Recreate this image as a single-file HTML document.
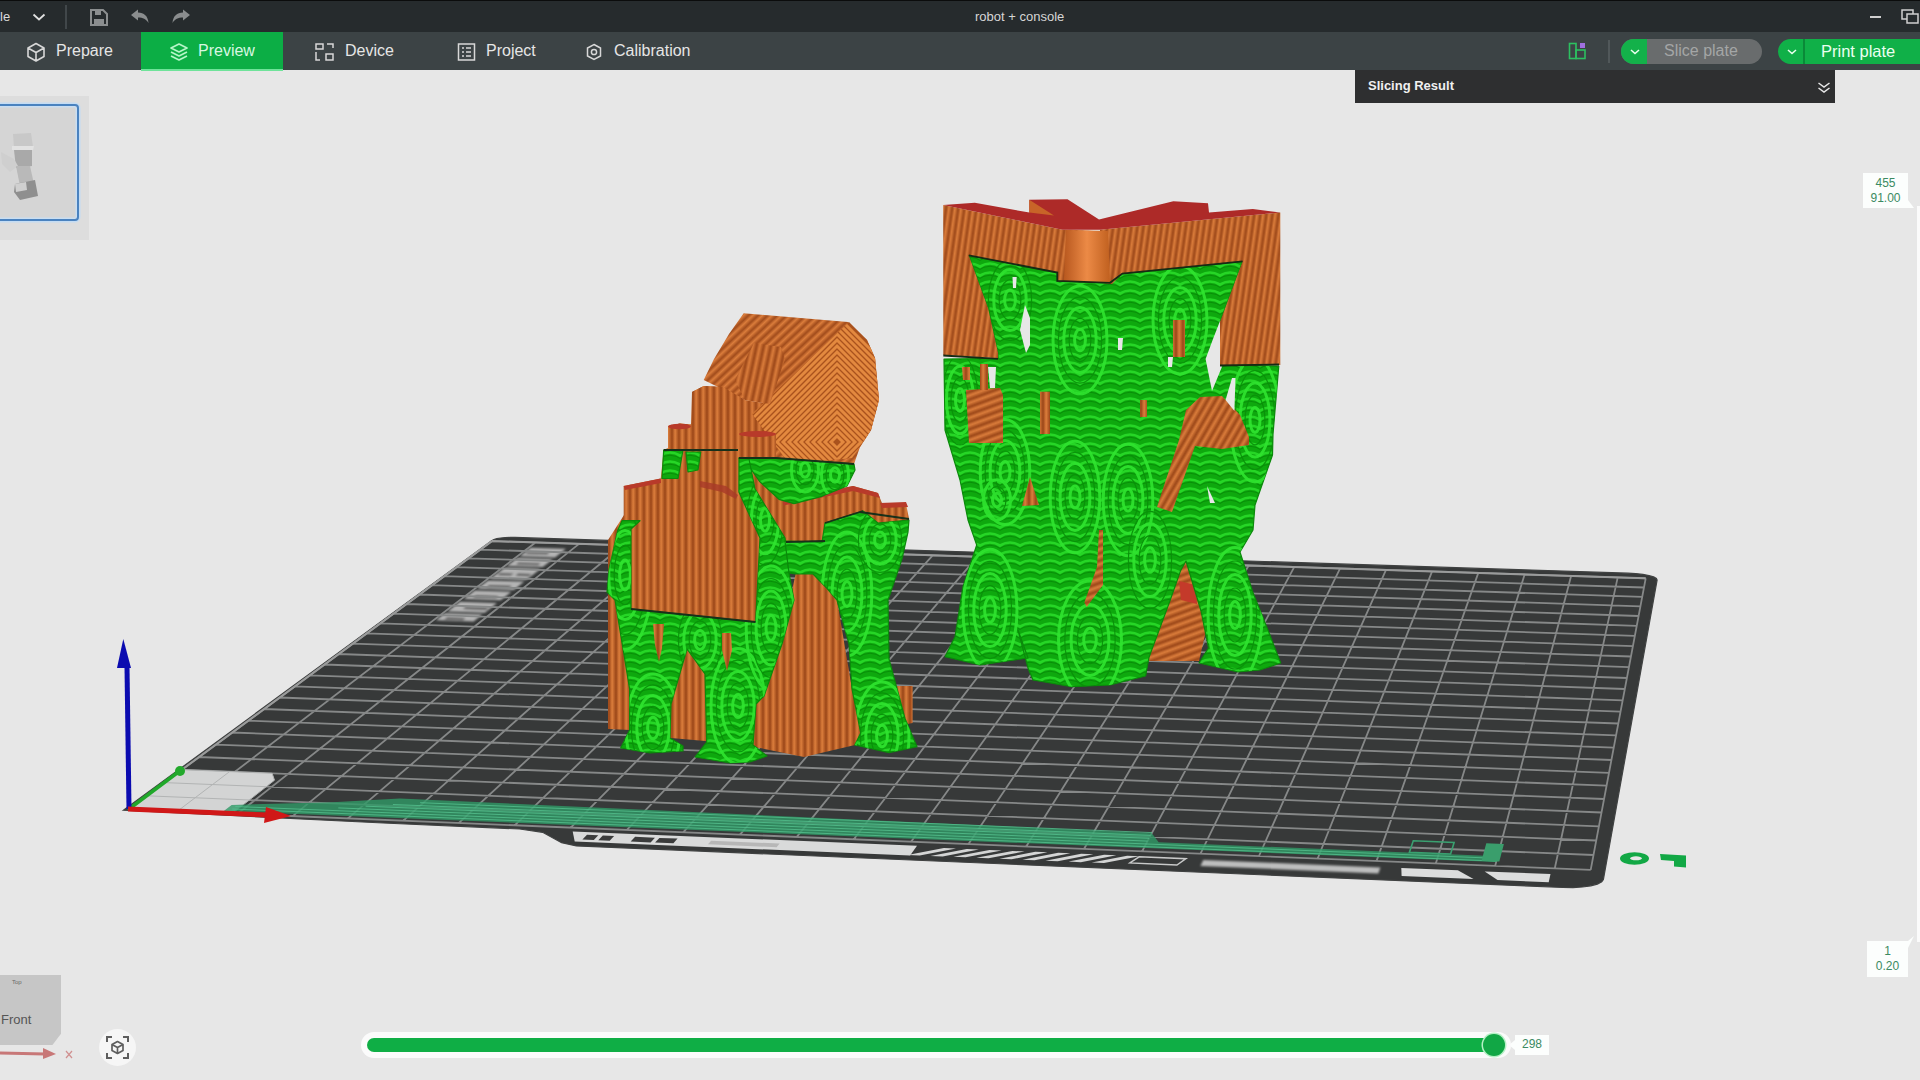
<!DOCTYPE html>
<html><head><meta charset="utf-8"><style>
html,body{margin:0;padding:0;width:1920px;height:1080px;overflow:hidden;background:#e7e7e7;font-family:"Liberation Sans", sans-serif}
#scene{position:absolute;left:0;top:0}
.tt{position:absolute;white-space:nowrap;line-height:1}
#titlebar{position:absolute;left:0;top:0;width:1920px;height:32px;background:#262b2d;border-top:1px solid #0b0c0c;box-sizing:border-box}
#tabbar{position:absolute;left:0;top:0;width:1920px;height:70px;pointer-events:none}
#tabbar::before{content:"";position:absolute;left:0;top:32px;width:1920px;height:38px;background:#3c4345}
#slres{position:absolute;left:1355px;top:70px;width:480px;height:33px;background:#2e2f30}
#thumbpanel{position:absolute;left:0;top:96px;width:89px;height:144px;background:#dddddd}
#thumb{position:absolute;left:-4px;top:104px;width:79px;height:113px;border:2px solid #4a82bf;border-radius:4px;background:#d5d5d5;box-shadow:0 0 0 1.5px #c4dcf3, inset 0 0 0 1.5px #c9def2}
.lbl{position:absolute;background:#fcfefd;font-size:12px;color:#3b8a62;line-height:1}
#cube{position:absolute;left:0;top:975px;width:61px;height:70px;background:#c6c6c6;clip-path:polygon(0 0,100% 0,100% 84%,86% 100%,0 100%)}
</style></head><body>
<svg id="scene" width="1920" height="1080" viewBox="0 0 1920 1080">
<defs>
<linearGradient id="sg" x1="0" x2="1" y1="0" y2="0"><stop offset="0" stop-color="#9a4618"/><stop offset="0.45" stop-color="#dc7e3c"/><stop offset="1" stop-color="#9a4618"/></linearGradient>
<pattern id="ostripe" width="7" height="10" patternUnits="userSpaceOnUse"><rect width="7" height="10" fill="url(#sg)"/></pattern>
<pattern id="ostripe2" width="6.5" height="10" patternUnits="userSpaceOnUse" patternTransform="rotate(47)"><rect width="7" height="10" fill="url(#sg)"/></pattern>
<pattern id="ostripe3" width="6" height="10" patternUnits="userSpaceOnUse" patternTransform="rotate(8)"><rect width="6" height="10" fill="url(#sg)"/></pattern>
<pattern id="ostripe4" width="7" height="10" patternUnits="userSpaceOnUse" patternTransform="rotate(12)"><rect width="7" height="10" fill="url(#sg)"/></pattern>
<pattern id="ostripe5" width="7" height="10" patternUnits="userSpaceOnUse" patternTransform="rotate(70)"><rect width="7" height="10" fill="url(#sg)"/></pattern>
<pattern id="ostripe6" width="7" height="10" patternUnits="userSpaceOnUse" patternTransform="rotate(30)"><rect width="7" height="10" fill="url(#sg)"/></pattern>
<linearGradient id="ocorner" x1="0" x2="1"><stop offset="0" stop-color="#b8581f"/><stop offset="0.5" stop-color="#ec8a46"/><stop offset="1" stop-color="#c0601f"/></linearGradient>
<pattern id="gtex" width="20" height="9" patternUnits="userSpaceOnUse"><rect width="20" height="9" fill="#0ea80e"/><path d="M-2 7 Q10 -2 22 7" stroke="#26d626" stroke-width="2.6" fill="none"/><path d="M-2 9.5 Q10 1 22 9.5" stroke="#078e07" stroke-width="1" fill="none"/></pattern>
<filter id="blur1" x="-20%" y="-20%" width="140%" height="140%"><feGaussianBlur stdDeviation="1.2"/></filter>
<clipPath id="headclip"><polygon points="849.0,322.0 867.0,340.0 875.0,358.0 879.0,400.0 871.0,430.0 860.0,447.0 852.0,458.0 790.0,465.0 752.0,414.0"/></clipPath><clipPath id="gc1"><polygon points="739.0,458.0 774.5,458.0 854.0,464.0 855.0,470.0 847.0,486.0 822.0,496.3 794.0,503.7 779.0,499.3 759.6,481.5 749.3,466.7"/></clipPath><clipPath id="gc2"><polygon points="739.0,458.0 749.0,459.0 755.0,489.0 785.0,538.0 789.0,573.0 794.0,600.0 782.0,644.0 764.0,696.0 756.0,704.0 753.0,745.0 767.0,756.0 750.0,762.0 730.0,763.0 695.0,757.0 706.7,742.0 705.0,674.0 687.0,649.0 671.0,704.0 670.0,738.0 683.0,746.0 683.0,751.0 650.0,753.0 620.7,748.0 629.6,730.0 629.6,689.0 615.0,600.0 607.0,592.0 609.0,570.0 617.8,530.0 622.0,520.7 640.0,520.7 631.0,529.0 631.0,609.0 755.6,622.0 760.0,538.0 738.9,492.0"/></clipPath><clipPath id="gc3"><polygon points="785.0,541.0 822.0,542.0 825.0,523.0 863.0,511.0 878.0,523.0 909.0,520.0 908.0,532.0 902.0,559.0 888.0,600.0 889.0,659.0 905.0,718.5 917.0,746.7 889.0,752.6 854.8,745.0 860.7,733.0 852.0,689.0 849.0,644.0 837.0,600.0 826.7,588.0 813.0,574.0 795.6,574.0 789.0,573.0"/></clipPath><clipPath id="gc4"><polygon points="968.7,255.3 1057.3,272.6 1057.3,280.8 1110.0,282.8 1122.4,273.6 1242.6,261.4 1220.0,322.0 1220.0,365.0 1278.8,366.0 1273.0,434.0 1272.5,455.0 1255.0,505.0 1253.0,530.0 1240.0,552.0 1253.0,592.6 1267.8,629.6 1280.7,663.0 1260.0,670.0 1238.0,672.0 1199.0,663.0 1208.5,648.0 1201.0,611.0 1186.0,561.0 1180.7,570.4 1169.6,601.9 1149.0,657.4 1145.6,676.0 1110.0,685.0 1071.7,686.7 1033.0,680.0 1028.0,668.0 1018.0,630.0 1028.0,658.0 980.0,665.0 945.0,656.7 955.0,636.7 963.0,586.7 976.7,545.0 968.0,520.0 960.0,480.0 945.0,430.0 944.0,359.0 998.0,358.3 998.0,353.0 988.0,308.0"/></clipPath></defs>
<polygon points="123.4,810.2 383.2,823.0 519.6,829.0 542.6,832.3 561.6,842.7 576.3,845.9 1562.9,887.5 1573.0,887.6 1582.5,887.0 1590.8,885.8 1597.4,884.1 1601.7,881.9 1603.4,879.4 1657.1,580.0 1656.4,578.5 1653.6,576.9 1649.0,575.6 1642.9,574.4 1635.7,573.6 1627.9,573.2 515.0,537.4 510.1,537.4 505.2,537.6 500.7,538.0 496.8,538.7 493.9,539.5 492.0,540.4" fill="#373939" stroke="#404242" stroke-width="1.2"/>
<g filter="url(#blur1)">
<polygon points="519.7,556.3 555.0,557.4 566.0,548.8 530.9,547.7" fill="#b4b4b4"/>
<polygon points="507.0,566.0 542.7,567.1 552.8,559.2 517.4,558.0" fill="#b4b4b4"/>
<polygon points="490.5,578.5 526.6,579.8 540.4,568.9 504.7,567.7" fill="#b4b4b4"/>
<polygon points="477.3,588.6 513.8,589.9 524.3,581.6 488.2,580.4" fill="#b4b4b4"/>
<polygon points="463.8,599.0 500.6,600.2 511.4,591.7 474.9,590.5" fill="#b4b4b4"/>
<polygon points="447.5,611.4 484.8,612.7 497.0,603.1 460.1,601.8" fill="#b4b4b4"/>
<polygon points="436.0,620.2 473.6,621.5 482.3,614.6 445.0,613.3" fill="#b4b4b4"/>
<polygon points="525.0,553.9 547.1,554.6 549.8,552.6 527.7,551.9" fill="#555"/>
<polygon points="515.8,564.6 538.0,565.3 540.7,563.2 518.5,562.5" fill="#555"/>
<polygon points="497.3,575.2 510.8,575.6 513.6,573.5 500.1,573.0" fill="#555"/>
<polygon points="515.3,575.8 528.8,576.2 531.6,574.1 518.1,573.6" fill="#555"/>
<polygon points="486.3,587.2 509.1,588.0 511.9,585.8 489.2,585.0" fill="#555"/>
<polygon points="472.9,597.5 495.9,598.3 498.8,596.0 475.9,595.2" fill="#555"/>
<polygon points="462.7,609.1 485.9,609.9 488.8,607.6 465.7,606.8" fill="#555"/>
<polygon points="444.1,619.6 462.8,620.3 465.9,617.9 447.2,617.3" fill="#555"/>
</g>
<path d="M128.2 809.3L491.9 541.1 M182.8 811.5L535.5 542.5 M237.6 813.8L579.1 543.9 M292.7 816.1L622.9 545.3 M347.9 818.4L666.7 546.7 M403.3 820.6L710.7 548.1 M458.9 822.9L754.9 549.6 M514.7 825.3L799.1 551.0 M570.7 827.6L843.5 552.4 M626.9 829.9L888.0 553.8 M683.4 832.2L932.7 555.3 M740.0 834.6L977.4 556.7 M796.8 836.9L1022.3 558.2 M853.8 839.3L1067.3 559.6 M911.1 841.7L1112.5 561.1 M968.5 844.0L1157.7 562.5 M1026.2 846.4L1203.1 564.0 M1084.1 848.8L1248.7 565.5 M1142.2 851.2L1294.3 566.9 M1200.5 853.6L1340.1 568.4 M1259.0 856.0L1386.0 569.9 M1317.7 858.5L1432.1 571.4 M1376.6 860.9L1478.3 572.9 M1435.8 863.4L1524.6 574.4 M1495.2 865.8L1571.1 575.9 M1554.8 868.3L1617.7 577.4 M1590.7 869.8L1645.7 578.3 M128.2 809.3L1590.7 869.8 M146.5 795.8L1593.5 855.0 M164.4 782.6L1596.2 840.5 M181.9 769.7L1598.9 826.4 M199.0 757.0L1601.5 812.5 M215.8 744.6L1604.0 799.0 M232.3 732.5L1606.5 785.7 M248.4 720.6L1609.0 772.8 M264.2 709.0L1611.4 760.0 M279.7 697.5L1613.7 747.6 M294.9 686.3L1616.0 735.4 M309.9 675.3L1618.3 723.5 M324.5 664.5L1620.5 711.7 M338.8 654.0L1622.7 700.3 M352.9 643.6L1624.8 689.0 M366.7 633.4L1626.9 678.0 M380.3 623.4L1628.9 667.1 M393.6 613.6L1630.9 656.5 M406.7 604.0L1632.9 646.1 M419.5 594.5L1634.8 635.9 M432.1 585.2L1636.7 625.8 M444.5 576.1L1638.6 616.0 M456.7 567.1L1640.4 606.3 M468.6 558.3L1642.2 596.8 M480.4 549.6L1644.0 587.5 M491.9 541.1L1645.7 578.3" stroke="#868888" stroke-width="1.8" fill="none"/>
<path d="M128.2 809.3L491.9 541.1 M491.9 541.1L1645.7 578.3" stroke="#9a9b9b" stroke-width="2" fill="none"/>
<polygon points="128.2,809.3 232.1,813.6 274.5,780.2 272.1,773.3 181.9,769.7" fill="#d3d4d4" stroke="#b0b2b2" stroke-width="1"/>
<path d="M177.3 811.3L229.6 771.6 M146.5 795.8L249.4 800.0 M164.4 782.6L266.2 786.7" stroke="#b2b4b4" stroke-width="1" fill="none"/>
<polygon points="223.8,811.1 1496.2,862.1 1497.7,856.2 1158.7,842.3 1151.8,833.3 399.8,798.4 332.4,802.3 231.6,804.9" fill="#2f9a66" opacity="0.8"/>
<path d="M232.2 809.0L1496.4 861.1 M235.3 806.5L1497.1 858.4 M338.3 807.9L1147.6 841.1 M365.6 806.2L1149.1 838.3 M392.9 804.5L1150.6 835.4 M420.1 802.7L1152.1 832.6" stroke="#55c08e" stroke-width="1" fill="none" opacity="0.8"/>
<polygon points="1409.4,852.3 1450.6,854.0 1454.1,842.4 1413.3,840.8" fill="none" stroke="#3aa070" stroke-width="1.6"/>
<polygon points="1481.5,860.8 1499.3,861.5 1503.9,844.0 1486.3,843.3" fill="#3a9e6c"/>
<polygon points="572.7,831.5 917.0,845.7 910.1,855.5 574.7,841.5" fill="#d9dada"/>
<polygon points="907.5,854.9 919.7,855.4 956.0,848.6 943.9,848.0" fill="#d4d5d5"/>
<polygon points="930.4,855.9 942.6,856.4 978.8,849.5 966.7,849.0" fill="#d4d5d5"/>
<polygon points="953.4,856.8 965.6,857.3 1001.7,850.4 989.5,849.9" fill="#d4d5d5"/>
<polygon points="976.3,857.8 988.5,858.3 1024.6,851.4 1012.4,850.9" fill="#d4d5d5"/>
<polygon points="999.3,858.8 1011.6,859.3 1047.5,852.3 1035.3,851.8" fill="#d4d5d5"/>
<polygon points="1022.4,859.7 1034.6,860.2 1070.4,853.3 1058.2,852.8" fill="#d4d5d5"/>
<polygon points="1045.4,860.7 1057.7,861.2 1093.4,854.3 1081.2,853.7" fill="#d4d5d5"/>
<polygon points="1068.5,861.6 1080.8,862.2 1116.4,855.2 1104.2,854.7" fill="#d4d5d5"/>
<polygon points="1091.7,862.6 1104.0,863.1 1139.5,856.2 1127.2,855.7" fill="#d4d5d5"/>
<polygon points="1139.2,856.8 1186.0,858.7 1176.9,865.0 1129.8,863.0" fill="none" stroke="#c8c9c9" stroke-width="1.4"/>
<polygon points="1203.3,860.0 1380.4,867.4 1378.3,873.4 1200.4,865.9" fill="#bdbebe" filter="url(#blur1)"/>
<polygon points="1401.3,867.9 1457.8,870.3 1473.5,879.0 1401.6,876.0" fill="#dcdddd"/>
<polygon points="1484.7,871.4 1550.5,874.1 1548.7,882.2 1497.5,880.0" fill="#dcdddd"/>
<polygon points="587.0,834.8 598.3,835.3 593.8,840.0 582.4,839.5" fill="#3b3c3c"/>
<polygon points="602.8,835.5 614.1,836.0 609.7,840.7 598.3,840.2" fill="#3b3c3c"/>
<polygon points="635.1,836.8 654.9,837.7 650.6,842.4 630.7,841.6" fill="#3b3c3c"/>
<polygon points="659.4,837.9 677.6,838.6 673.4,843.3 655.1,842.6" fill="#3b3c3c"/>
<polygon points="711.1,840.7 779.6,843.6 776.6,847.2 708.0,844.3" fill="#a0a0a0" opacity="0.6"/>
<ellipse cx="1634.5" cy="858.5" rx="14.5" ry="6.2" fill="#12a845"/><ellipse cx="1636" cy="858.3" rx="6" ry="2" fill="#e7e7e7"/>
<polygon points="1660,854 1686,855.5 1686,867.5 1674,866.5 1674,861 1661,860" fill="#12a845"/>
<path d="M129 809 L177 773" stroke="#20a82a" stroke-width="3.5" stroke-linecap="round"/><circle cx="180" cy="771" r="5" fill="#23a92c"/>
<path d="M129 809 L127 667" stroke="#0b0bb0" stroke-width="5"/><polygon points="117,668 123.3,639 131,668" fill="#0b0bb0"/>
<path d="M128 809 L268 815" stroke="#d01818" stroke-width="5"/><polygon points="266,807 291,816 264,823" fill="#d01818"/>
<polygon points="608.0,540.0 624.0,515.0 760.0,515.0 790.0,600.0 837.0,600.0 852.0,689.0 898.0,686.0 912.6,686.0 912.6,723.0 861.0,733.0 855.0,745.0 804.0,757.0 760.0,748.0 705.0,741.0 671.0,738.0 630.0,730.0 608.0,729.0" fill="url(#ostripe)" />
<polygon points="623.7,486.0 660.7,478.5 663.7,450.0 668.0,448.0 668.0,426.0 680.0,423.5 691.0,424.4 692.0,392.0 703.7,386.0 723.0,387.0 745.0,400.0 770.0,404.0 776.0,433.0 776.0,457.0 739.0,458.0 738.9,492.0 760.0,538.0 631.0,529.0 623.7,520.0" fill="url(#ostripe)" />
<polygon points="743.7,313.3 848.0,322.0 867.0,340.0 875.0,358.0 879.0,400.0 871.0,430.0 860.0,447.0 854.0,464.0 776.0,458.0 770.0,404.0 745.0,400.0 703.7,380.0 714.0,359.0 729.0,334.0" fill="url(#ostripe2)" />
<g clip-path="url(#headclip)"><rect x="700" y="310" width="180" height="160" fill="#a9521d"/><polygon points="837.0,436.0 843.0,442.0 837.0,448.0 831.0,442.0" fill="none" stroke="#e3893f" stroke-width="3.0"/><polygon points="837.0,430.0 849.0,442.0 837.0,454.0 825.0,442.0" fill="none" stroke="#e3893f" stroke-width="3.0"/><polygon points="837.0,424.0 855.0,442.0 837.0,460.0 819.0,442.0" fill="none" stroke="#e3893f" stroke-width="3.0"/><polygon points="837.0,418.0 861.0,442.0 837.0,466.0 813.0,442.0" fill="none" stroke="#e3893f" stroke-width="3.0"/><polygon points="837.0,412.0 867.0,442.0 837.0,472.0 807.0,442.0" fill="none" stroke="#e3893f" stroke-width="3.0"/><polygon points="837.0,406.0 873.0,442.0 837.0,478.0 801.0,442.0" fill="none" stroke="#e3893f" stroke-width="3.0"/><polygon points="837.0,400.0 879.0,442.0 837.0,484.0 795.0,442.0" fill="none" stroke="#e3893f" stroke-width="3.0"/><polygon points="837.0,394.0 885.0,442.0 837.0,490.0 789.0,442.0" fill="none" stroke="#e3893f" stroke-width="3.0"/><polygon points="837.0,388.0 891.0,442.0 837.0,496.0 783.0,442.0" fill="none" stroke="#e3893f" stroke-width="3.0"/><polygon points="837.0,382.0 897.0,442.0 837.0,502.0 777.0,442.0" fill="none" stroke="#e3893f" stroke-width="3.0"/><polygon points="837.0,376.0 903.0,442.0 837.0,508.0 771.0,442.0" fill="none" stroke="#e3893f" stroke-width="3.0"/><polygon points="837.0,370.0 909.0,442.0 837.0,514.0 765.0,442.0" fill="none" stroke="#e3893f" stroke-width="3.0"/><polygon points="837.0,364.0 915.0,442.0 837.0,520.0 759.0,442.0" fill="none" stroke="#e3893f" stroke-width="3.0"/><polygon points="837.0,358.0 921.0,442.0 837.0,526.0 753.0,442.0" fill="none" stroke="#e3893f" stroke-width="3.0"/><polygon points="837.0,352.0 927.0,442.0 837.0,532.0 747.0,442.0" fill="none" stroke="#e3893f" stroke-width="3.0"/><polygon points="837.0,346.0 933.0,442.0 837.0,538.0 741.0,442.0" fill="none" stroke="#e3893f" stroke-width="3.0"/><polygon points="837.0,340.0 939.0,442.0 837.0,544.0 735.0,442.0" fill="none" stroke="#e3893f" stroke-width="3.0"/><polygon points="837.0,334.0 945.0,442.0 837.0,550.0 729.0,442.0" fill="none" stroke="#e3893f" stroke-width="3.0"/><polygon points="837.0,328.0 951.0,442.0 837.0,556.0 723.0,442.0" fill="none" stroke="#e3893f" stroke-width="3.0"/><polygon points="837.0,322.0 957.0,442.0 837.0,562.0 717.0,442.0" fill="none" stroke="#e3893f" stroke-width="3.0"/><polygon points="837.0,316.0 963.0,442.0 837.0,568.0 711.0,442.0" fill="none" stroke="#e3893f" stroke-width="3.0"/></g>
<polygon points="754.0,343.0 781.0,347.0 785.0,359.0 770.0,404.0 745.0,400.0 735.0,380.0" fill="url(#ostripe4)" />
<polygon points="692.0,392.0 703.7,386.0 723.0,387.0 745.0,400.0 738.0,458.0 692.0,449.0" fill="url(#ostripe)" />
<polygon points="668.0,426.0 680.0,423.5 691.0,424.4 691.0,449.0 668.0,449.0" fill="url(#ostripe)" />
<polygon points="739.0,434.0 757.0,431.0 776.0,434.0 776.0,457.0 740.0,457.0" fill="url(#ostripe)" />
<ellipse cx="679.5" cy="426.5" rx="11.5" ry="2.8" fill="#b83a2a"/>
<ellipse cx="757.5" cy="434" rx="18.5" ry="3" fill="#b83a2a"/>
<polygon points="815.0,505.0 865.0,505.0 865.0,545.0 815.0,545.0" fill="url(#ostripe)" />
<polygon points="774.5,502.0 853.0,486.0 878.0,493.0 882.7,505.0 906.0,504.0 909.0,518.6 909.0,528.0 881.0,530.0 860.0,512.0 819.0,523.0 825.0,541.0 786.0,542.0 774.5,514.0" fill="url(#ostripe)" />
<polygon points="774.5,502.0 853.0,486.0 878.0,493.0 880.0,498.0 853.0,491.0 776.0,507.0" fill="#b83a2a" />
<polygon points="880.0,503.0 906.0,502.0 908.0,507.0 882.0,508.0" fill="#b83a2a" />
<polygon points="623.7,486.0 660.7,478.5 661.0,483.0 625.0,490.0" fill="#b83a2a" />
<polygon points="700.0,481.0 726.0,486.0 738.0,495.0 736.0,499.0 722.0,492.0 700.0,487.0" fill="#a83a28" opacity="0.8"/>
<polygon points="749.0,459.0 780.0,459.0 786.0,542.0 760.0,538.0" fill="url(#ostripe)" />
<polygon points="795.6,574.0 813.0,574.0 826.7,588.0 837.0,600.0 790.0,600.0" fill="url(#ostripe)" />
<polygon points="739.0,458.0 774.5,458.0 854.0,464.0 855.0,470.0 847.0,486.0 822.0,496.3 794.0,503.7 779.0,499.3 759.6,481.5 749.3,466.7" fill="url(#gtex)" stroke="#0b8a0b" stroke-width="1.2" stroke-linejoin="round"/>
<g clip-path="url(#gc1)" opacity="0.9"><ellipse cx="805.0" cy="470.0" rx="4.5" ry="7.3" fill="none" stroke="#30e430" stroke-width="3.0"/><ellipse cx="805.0" cy="470.0" rx="9.0" ry="14.6" fill="none" stroke="#0a900a" stroke-width="1.2"/><ellipse cx="805.0" cy="470.0" rx="13.5" ry="21.9" fill="none" stroke="#30e430" stroke-width="3.0"/><ellipse cx="835.0" cy="475.0" rx="4.5" ry="7.3" fill="none" stroke="#30e430" stroke-width="3.0"/><ellipse cx="835.0" cy="475.0" rx="9.0" ry="14.6" fill="none" stroke="#0a900a" stroke-width="1.2"/><ellipse cx="835.0" cy="475.0" rx="13.5" ry="21.9" fill="none" stroke="#30e430" stroke-width="3.0"/></g>
<polygon points="663.7,450.0 683.0,450.0 678.0,478.5 662.0,478.5" fill="url(#gtex)" stroke="#0b8a0b" stroke-width="1.2" stroke-linejoin="round"/>
<polygon points="686.0,452.0 700.7,452.0 698.0,470.0 688.0,472.0" fill="url(#gtex)" stroke="#0b8a0b" stroke-width="1.2" stroke-linejoin="round"/>
<polygon points="739.0,458.0 749.0,459.0 755.0,489.0 785.0,538.0 789.0,573.0 794.0,600.0 782.0,644.0 764.0,696.0 756.0,704.0 753.0,745.0 767.0,756.0 750.0,762.0 730.0,763.0 695.0,757.0 706.7,742.0 705.0,674.0 687.0,649.0 671.0,704.0 670.0,738.0 683.0,746.0 683.0,751.0 650.0,753.0 620.7,748.0 629.6,730.0 629.6,689.0 615.0,600.0 607.0,592.0 609.0,570.0 617.8,530.0 622.0,520.7 640.0,520.7 631.0,529.0 631.0,609.0 755.6,622.0 760.0,538.0 738.9,492.0" fill="url(#gtex)" stroke="#0b8a0b" stroke-width="1.2" stroke-linejoin="round"/>
<g clip-path="url(#gc2)" opacity="0.9"><ellipse cx="653.0" cy="728.0" rx="5.4" ry="10.8" fill="none" stroke="#30e430" stroke-width="3.0"/><ellipse cx="653.0" cy="728.0" rx="10.8" ry="21.6" fill="none" stroke="#0a900a" stroke-width="1.2"/><ellipse cx="653.0" cy="728.0" rx="16.2" ry="32.4" fill="none" stroke="#30e430" stroke-width="3.0"/><ellipse cx="653.0" cy="728.0" rx="21.6" ry="43.2" fill="none" stroke="#0a900a" stroke-width="1.2"/><ellipse cx="653.0" cy="728.0" rx="27.0" ry="54.0" fill="none" stroke="#30e430" stroke-width="3.0"/><ellipse cx="738.0" cy="706.0" rx="5.4" ry="11.5" fill="none" stroke="#30e430" stroke-width="3.0"/><ellipse cx="738.0" cy="706.0" rx="10.8" ry="23.0" fill="none" stroke="#0a900a" stroke-width="1.2"/><ellipse cx="738.0" cy="706.0" rx="16.2" ry="34.4" fill="none" stroke="#30e430" stroke-width="3.0"/><ellipse cx="738.0" cy="706.0" rx="21.6" ry="45.9" fill="none" stroke="#0a900a" stroke-width="1.2"/><ellipse cx="738.0" cy="706.0" rx="27.0" ry="57.4" fill="none" stroke="#30e430" stroke-width="3.0"/><ellipse cx="771.0" cy="628.0" rx="5.0" ry="12.4" fill="none" stroke="#30e430" stroke-width="3.0"/><ellipse cx="771.0" cy="628.0" rx="9.9" ry="24.8" fill="none" stroke="#0a900a" stroke-width="1.2"/><ellipse cx="771.0" cy="628.0" rx="14.9" ry="37.1" fill="none" stroke="#30e430" stroke-width="3.0"/><ellipse cx="771.0" cy="628.0" rx="19.8" ry="49.5" fill="none" stroke="#0a900a" stroke-width="1.2"/><ellipse cx="771.0" cy="628.0" rx="24.8" ry="61.9" fill="none" stroke="#30e430" stroke-width="3.0"/><ellipse cx="625.0" cy="575.0" rx="5.4" ry="14.9" fill="none" stroke="#30e430" stroke-width="3.0"/><ellipse cx="625.0" cy="575.0" rx="10.8" ry="29.7" fill="none" stroke="#0a900a" stroke-width="1.2"/><ellipse cx="625.0" cy="575.0" rx="16.2" ry="44.6" fill="none" stroke="#30e430" stroke-width="3.0"/><ellipse cx="625.0" cy="575.0" rx="21.6" ry="59.4" fill="none" stroke="#0a900a" stroke-width="1.2"/><ellipse cx="625.0" cy="575.0" rx="27.0" ry="74.2" fill="none" stroke="#30e430" stroke-width="3.0"/><ellipse cx="700.0" cy="640.0" rx="5.4" ry="9.5" fill="none" stroke="#30e430" stroke-width="3.0"/><ellipse cx="700.0" cy="640.0" rx="10.8" ry="18.9" fill="none" stroke="#0a900a" stroke-width="1.2"/><ellipse cx="700.0" cy="640.0" rx="16.2" ry="28.4" fill="none" stroke="#30e430" stroke-width="3.0"/><ellipse cx="700.0" cy="640.0" rx="21.6" ry="37.8" fill="none" stroke="#0a900a" stroke-width="1.2"/><ellipse cx="765.0" cy="520.0" rx="4.5" ry="11.2" fill="none" stroke="#30e430" stroke-width="3.0"/><ellipse cx="765.0" cy="520.0" rx="9.0" ry="22.5" fill="none" stroke="#0a900a" stroke-width="1.2"/><ellipse cx="765.0" cy="520.0" rx="13.5" ry="33.8" fill="none" stroke="#30e430" stroke-width="3.0"/><ellipse cx="765.0" cy="520.0" rx="18.0" ry="45.0" fill="none" stroke="#0a900a" stroke-width="1.2"/></g>
<polygon points="653.0,624.0 664.0,624.0 662.0,648.0 659.0,662.0 655.0,645.0" fill="url(#ostripe)" />
<polygon points="722.0,633.0 731.0,633.0 732.0,650.0 727.0,671.0 722.0,650.0" fill="url(#ostripe)" />
<polygon points="785.0,541.0 822.0,542.0 825.0,523.0 863.0,511.0 878.0,523.0 909.0,520.0 908.0,532.0 902.0,559.0 888.0,600.0 889.0,659.0 905.0,718.5 917.0,746.7 889.0,752.6 854.8,745.0 860.7,733.0 852.0,689.0 849.0,644.0 837.0,600.0 826.7,588.0 813.0,574.0 795.6,574.0 789.0,573.0" fill="url(#gtex)" stroke="#0b8a0b" stroke-width="1.2" stroke-linejoin="round"/>
<g clip-path="url(#gc3)" opacity="0.9"><ellipse cx="847.0" cy="594.0" rx="5.0" ry="12.4" fill="none" stroke="#30e430" stroke-width="3.0"/><ellipse cx="847.0" cy="594.0" rx="9.9" ry="24.8" fill="none" stroke="#0a900a" stroke-width="1.2"/><ellipse cx="847.0" cy="594.0" rx="14.9" ry="37.1" fill="none" stroke="#30e430" stroke-width="3.0"/><ellipse cx="847.0" cy="594.0" rx="19.8" ry="49.5" fill="none" stroke="#0a900a" stroke-width="1.2"/><ellipse cx="847.0" cy="594.0" rx="24.8" ry="61.9" fill="none" stroke="#30e430" stroke-width="3.0"/><ellipse cx="882.0" cy="736.0" rx="5.4" ry="10.8" fill="none" stroke="#30e430" stroke-width="3.0"/><ellipse cx="882.0" cy="736.0" rx="10.8" ry="21.6" fill="none" stroke="#0a900a" stroke-width="1.2"/><ellipse cx="882.0" cy="736.0" rx="16.2" ry="32.4" fill="none" stroke="#30e430" stroke-width="3.0"/><ellipse cx="882.0" cy="736.0" rx="21.6" ry="43.2" fill="none" stroke="#0a900a" stroke-width="1.2"/><ellipse cx="882.0" cy="736.0" rx="27.0" ry="54.0" fill="none" stroke="#30e430" stroke-width="3.0"/><ellipse cx="880.0" cy="540.0" rx="5.4" ry="8.1" fill="none" stroke="#30e430" stroke-width="3.0"/><ellipse cx="880.0" cy="540.0" rx="10.8" ry="16.2" fill="none" stroke="#0a900a" stroke-width="1.2"/><ellipse cx="880.0" cy="540.0" rx="16.2" ry="24.3" fill="none" stroke="#30e430" stroke-width="3.0"/><ellipse cx="880.0" cy="540.0" rx="21.6" ry="32.4" fill="none" stroke="#0a900a" stroke-width="1.2"/></g>
<path d="M631 609 L755.6 622 M739 458 L776 458 L854 464 M663.7 450 L738 450 M786 542 L825 541 M860 512 L909 519 M825 523 L863 511" stroke="#17301a" stroke-width="1.8" fill="none"/>
<polygon points="1083.0,560.0 1103.0,560.0 1103.0,612.0 1083.0,612.0" fill="url(#ostripe5)" />
<polygon points="1147.4,661.0 1199.0,661.0 1208.5,620.0 1186.0,561.0 1179.0,570.0" fill="url(#ostripe5)" />
<polygon points="1179.0,581.0 1195.5,585.0 1197.0,604.0 1181.0,600.0" fill="#c43a2a" />
<polygon points="968.7,255.3 1057.3,272.6 1057.3,280.8 1110.0,282.8 1122.4,273.6 1242.6,261.4 1220.0,322.0 1220.0,365.0 1278.8,366.0 1273.0,434.0 1272.5,455.0 1255.0,505.0 1253.0,530.0 1240.0,552.0 1253.0,592.6 1267.8,629.6 1280.7,663.0 1260.0,670.0 1238.0,672.0 1199.0,663.0 1208.5,648.0 1201.0,611.0 1186.0,561.0 1180.7,570.4 1169.6,601.9 1149.0,657.4 1145.6,676.0 1110.0,685.0 1071.7,686.7 1033.0,680.0 1028.0,668.0 1018.0,630.0 1028.0,658.0 980.0,665.0 945.0,656.7 955.0,636.7 963.0,586.7 976.7,545.0 968.0,520.0 960.0,480.0 945.0,430.0 944.0,359.0 998.0,358.3 998.0,353.0 988.0,308.0" fill="url(#gtex)" stroke="#0b8a0b" stroke-width="1.2" stroke-linejoin="round"/>
<g clip-path="url(#gc4)" opacity="0.9"><ellipse cx="1005.0" cy="472.0" rx="5.0" ry="10.5" fill="none" stroke="#30e430" stroke-width="3.0"/><ellipse cx="1005.0" cy="472.0" rx="9.9" ry="21.0" fill="none" stroke="#0a900a" stroke-width="1.2"/><ellipse cx="1005.0" cy="472.0" rx="14.9" ry="31.6" fill="none" stroke="#30e430" stroke-width="3.0"/><ellipse cx="1005.0" cy="472.0" rx="19.8" ry="42.1" fill="none" stroke="#0a900a" stroke-width="1.2"/><ellipse cx="1005.0" cy="472.0" rx="24.8" ry="52.6" fill="none" stroke="#30e430" stroke-width="3.0"/><ellipse cx="997.0" cy="500.0" rx="4.5" ry="6.8" fill="none" stroke="#30e430" stroke-width="3.0"/><ellipse cx="997.0" cy="500.0" rx="9.0" ry="13.5" fill="none" stroke="#0a900a" stroke-width="1.2"/><ellipse cx="997.0" cy="500.0" rx="13.5" ry="20.2" fill="none" stroke="#30e430" stroke-width="3.0"/><ellipse cx="1075.0" cy="497.0" rx="5.0" ry="11.1" fill="none" stroke="#30e430" stroke-width="3.0"/><ellipse cx="1075.0" cy="497.0" rx="9.9" ry="22.3" fill="none" stroke="#0a900a" stroke-width="1.2"/><ellipse cx="1075.0" cy="497.0" rx="14.9" ry="33.4" fill="none" stroke="#30e430" stroke-width="3.0"/><ellipse cx="1075.0" cy="497.0" rx="19.8" ry="44.6" fill="none" stroke="#0a900a" stroke-width="1.2"/><ellipse cx="1075.0" cy="497.0" rx="24.8" ry="55.7" fill="none" stroke="#30e430" stroke-width="3.0"/><ellipse cx="1128.0" cy="500.0" rx="5.0" ry="11.1" fill="none" stroke="#30e430" stroke-width="3.0"/><ellipse cx="1128.0" cy="500.0" rx="9.9" ry="22.3" fill="none" stroke="#0a900a" stroke-width="1.2"/><ellipse cx="1128.0" cy="500.0" rx="14.9" ry="33.4" fill="none" stroke="#30e430" stroke-width="3.0"/><ellipse cx="1128.0" cy="500.0" rx="19.8" ry="44.6" fill="none" stroke="#0a900a" stroke-width="1.2"/><ellipse cx="1128.0" cy="500.0" rx="24.8" ry="55.7" fill="none" stroke="#30e430" stroke-width="3.0"/><ellipse cx="990.0" cy="610.0" rx="5.4" ry="12.2" fill="none" stroke="#30e430" stroke-width="3.0"/><ellipse cx="990.0" cy="610.0" rx="10.8" ry="24.3" fill="none" stroke="#0a900a" stroke-width="1.2"/><ellipse cx="990.0" cy="610.0" rx="16.2" ry="36.5" fill="none" stroke="#30e430" stroke-width="3.0"/><ellipse cx="990.0" cy="610.0" rx="21.6" ry="48.6" fill="none" stroke="#0a900a" stroke-width="1.2"/><ellipse cx="990.0" cy="610.0" rx="27.0" ry="60.8" fill="none" stroke="#30e430" stroke-width="3.0"/><ellipse cx="1090.0" cy="640.0" rx="6.3" ry="11.8" fill="none" stroke="#30e430" stroke-width="3.0"/><ellipse cx="1090.0" cy="640.0" rx="12.6" ry="23.6" fill="none" stroke="#0a900a" stroke-width="1.2"/><ellipse cx="1090.0" cy="640.0" rx="18.9" ry="35.4" fill="none" stroke="#30e430" stroke-width="3.0"/><ellipse cx="1090.0" cy="640.0" rx="25.2" ry="47.2" fill="none" stroke="#0a900a" stroke-width="1.2"/><ellipse cx="1090.0" cy="640.0" rx="31.5" ry="59.1" fill="none" stroke="#30e430" stroke-width="3.0"/><ellipse cx="1235.0" cy="615.0" rx="5.4" ry="13.5" fill="none" stroke="#30e430" stroke-width="3.0"/><ellipse cx="1235.0" cy="615.0" rx="10.8" ry="27.0" fill="none" stroke="#0a900a" stroke-width="1.2"/><ellipse cx="1235.0" cy="615.0" rx="16.2" ry="40.5" fill="none" stroke="#30e430" stroke-width="3.0"/><ellipse cx="1235.0" cy="615.0" rx="21.6" ry="54.0" fill="none" stroke="#0a900a" stroke-width="1.2"/><ellipse cx="1235.0" cy="615.0" rx="27.0" ry="67.5" fill="none" stroke="#30e430" stroke-width="3.0"/><ellipse cx="1255.0" cy="420.0" rx="5.0" ry="12.4" fill="none" stroke="#30e430" stroke-width="3.0"/><ellipse cx="1255.0" cy="420.0" rx="9.9" ry="24.8" fill="none" stroke="#0a900a" stroke-width="1.2"/><ellipse cx="1255.0" cy="420.0" rx="14.9" ry="37.1" fill="none" stroke="#30e430" stroke-width="3.0"/><ellipse cx="1255.0" cy="420.0" rx="19.8" ry="49.5" fill="none" stroke="#0a900a" stroke-width="1.2"/><ellipse cx="1255.0" cy="420.0" rx="24.8" ry="61.9" fill="none" stroke="#30e430" stroke-width="3.0"/><ellipse cx="960.0" cy="400.0" rx="4.5" ry="11.2" fill="none" stroke="#30e430" stroke-width="3.0"/><ellipse cx="960.0" cy="400.0" rx="9.0" ry="22.5" fill="none" stroke="#0a900a" stroke-width="1.2"/><ellipse cx="960.0" cy="400.0" rx="13.5" ry="33.8" fill="none" stroke="#30e430" stroke-width="3.0"/><ellipse cx="960.0" cy="400.0" rx="18.0" ry="45.0" fill="none" stroke="#0a900a" stroke-width="1.2"/><ellipse cx="1080.0" cy="340.0" rx="5.4" ry="10.8" fill="none" stroke="#30e430" stroke-width="3.0"/><ellipse cx="1080.0" cy="340.0" rx="10.8" ry="21.6" fill="none" stroke="#0a900a" stroke-width="1.2"/><ellipse cx="1080.0" cy="340.0" rx="16.2" ry="32.4" fill="none" stroke="#30e430" stroke-width="3.0"/><ellipse cx="1080.0" cy="340.0" rx="21.6" ry="43.2" fill="none" stroke="#0a900a" stroke-width="1.2"/><ellipse cx="1080.0" cy="340.0" rx="27.0" ry="54.0" fill="none" stroke="#30e430" stroke-width="3.0"/><ellipse cx="1180.0" cy="320.0" rx="5.4" ry="10.8" fill="none" stroke="#30e430" stroke-width="3.0"/><ellipse cx="1180.0" cy="320.0" rx="10.8" ry="21.6" fill="none" stroke="#0a900a" stroke-width="1.2"/><ellipse cx="1180.0" cy="320.0" rx="16.2" ry="32.4" fill="none" stroke="#30e430" stroke-width="3.0"/><ellipse cx="1180.0" cy="320.0" rx="21.6" ry="43.2" fill="none" stroke="#0a900a" stroke-width="1.2"/><ellipse cx="1180.0" cy="320.0" rx="27.0" ry="54.0" fill="none" stroke="#30e430" stroke-width="3.0"/><ellipse cx="1010.0" cy="300.0" rx="5.4" ry="10.1" fill="none" stroke="#30e430" stroke-width="3.0"/><ellipse cx="1010.0" cy="300.0" rx="10.8" ry="20.2" fill="none" stroke="#0a900a" stroke-width="1.2"/><ellipse cx="1010.0" cy="300.0" rx="16.2" ry="30.4" fill="none" stroke="#30e430" stroke-width="3.0"/><ellipse cx="1010.0" cy="300.0" rx="21.6" ry="40.5" fill="none" stroke="#0a900a" stroke-width="1.2"/><ellipse cx="1150.0" cy="560.0" rx="5.4" ry="12.2" fill="none" stroke="#30e430" stroke-width="3.0"/><ellipse cx="1150.0" cy="560.0" rx="10.8" ry="24.3" fill="none" stroke="#0a900a" stroke-width="1.2"/><ellipse cx="1150.0" cy="560.0" rx="16.2" ry="36.5" fill="none" stroke="#30e430" stroke-width="3.0"/><ellipse cx="1150.0" cy="560.0" rx="21.6" ry="48.6" fill="none" stroke="#0a900a" stroke-width="1.2"/></g>
<polygon points="1099.0,530.0 1103.0,530.0 1103.0,585.0 1086.7,607.0 1084.4,602.6 1097.0,567.0" fill="url(#ostripe5)" />
<polygon points="966.0,390.0 1000.0,388.0 1003.0,395.0 1003.0,443.0 969.0,443.0" fill="url(#ostripe5)" />
<polygon points="980.0,364.0 988.0,364.0 988.0,390.0 980.0,390.0" fill="url(#ostripe)" />
<polygon points="962.0,367.0 970.0,367.0 970.0,380.0 963.0,380.0" fill="url(#ostripe)" />
<polygon points="1040.0,391.7 1050.0,391.7 1050.0,434.0 1040.0,434.0" fill="url(#ostripe)" />
<polygon points="1030.0,477.0 1039.0,505.0 1022.0,506.0" fill="url(#ostripe)" />
<polygon points="1173.0,320.0 1185.0,320.0 1185.0,357.0 1173.0,357.0" fill="url(#ostripe)" />
<polygon points="1140.0,400.0 1147.0,400.0 1147.0,417.0 1140.0,417.0" fill="url(#ostripe)" />
<polygon points="1179.0,440.0 1186.0,410.0 1200.0,397.0 1222.0,396.0 1240.0,415.0 1249.0,437.0 1249.0,445.0 1222.0,449.0 1195.0,446.0 1172.0,512.0 1157.0,507.0" fill="url(#ostripe6)" />
<polygon points="1220.0,321.0 1220.0,364.4 1222.0,366.7 1212.0,391.0 1205.6,359.0 1213.0,339.0" fill="#e7e7e7" />
<polygon points="1232.0,378.0 1235.5,378.0 1234.4,411.0 1225.6,400.0" fill="#e7e7e7" />
<polygon points="1012.5,277.0 1016.7,277.0 1016.0,288.0 1013.0,288.0" fill="#e7e7e7" />
<polygon points="1025.0,305.0 1030.0,318.0 1030.0,345.0 1026.0,353.0 1020.0,330.0" fill="#e7e7e7" />
<polygon points="988.0,367.0 996.0,367.0 995.0,388.0 990.0,388.0" fill="#e7e7e7" />
<polygon points="1118.0,338.0 1123.0,338.0 1122.0,350.0 1118.0,350.0" fill="#e7e7e7" />
<polygon points="1168.0,357.0 1173.0,357.0 1172.0,367.0 1168.0,367.0" fill="#e7e7e7" />
<polygon points="1207.0,486.0 1215.0,503.0 1210.0,503.0" fill="#e7e7e7" />
<polygon points="943.2,204.9 1062.4,229.8 1072.6,229.8 1110.0,231.9 1110.0,282.8 1057.3,280.8 1057.3,272.6 968.7,255.3 988.0,308.0 998.0,353.0 998.0,358.3 943.3,355.0" fill="url(#ostripe3)" />
<polygon points="1100.0,229.8 1280.3,212.5 1280.3,365.0 1220.0,365.0 1220.0,322.0 1242.6,261.4 1122.4,273.6 1112.0,284.0 1100.0,282.8" fill="url(#ostripe3)" />
<polygon points="1066.0,230.0 1108.0,231.0 1110.0,283.0 1064.0,281.0" fill="url(#ocorner)" />
<polygon points="943.2,204.9 974.8,202.8 1029.3,212.5 1029.3,199.8 1067.5,199.3 1099.0,219.6 1173.3,201.3 1208.0,203.3 1209.0,212.5 1252.8,209.0 1280.3,212.5 1100.0,229.8 1062.4,229.8" fill="#ad2a28" />
<polygon points="1029.3,199.8 1054.0,215.6 1029.3,212.5" fill="#c86428" />
<path d="M968.7 255.3 L1057.3 272.6 L1057.3 280.8 L1110 282.8 L1122.4 273.6 L1242.6 261.4 M943.3 355.5 L998 358.8 M1220 365.5 L1279 364.5" stroke="#172a14" stroke-width="1.8" fill="none"/>
</svg>

<div id="titlebar">
  <div class="tt" style="left:0;top:9px;font-size:13px;color:#dcdcdc">le</div>
  <svg style="position:absolute;left:32px;top:11px" width="14" height="10"><path d="M1.5 2.5 L7 7.5 L12.5 2.5" stroke="#e0e0e0" stroke-width="1.8" fill="none"/></svg>
  <div style="position:absolute;left:65px;top:4px;width:2px;height:24px;background:#41474a"></div>
  <svg style="position:absolute;left:89px;top:7px" width="20" height="19"><path d="M2 2 H14 L18 6 V17 H2 Z" fill="none" stroke="#8b8e8f" stroke-width="2"/><rect x="5" y="11" width="10" height="6" fill="#8b8e8f"/><rect x="6" y="3" width="6" height="4" fill="#8b8e8f"/></svg>
  <svg style="position:absolute;left:130px;top:8px" width="20" height="15"><path d="M1 6 L8 0.5 V3.5 C14 3.5 18 7 18.5 14 C16 10 13 8.5 8 8.5 V11.5 Z" fill="#8a8d8e"/></svg>
  <svg style="position:absolute;left:171px;top:8px" width="20" height="15"><path d="M19 6 L12 0.5 V3.5 C6 3.5 2 7 1.5 14 C4 10 7 8.5 12 8.5 V11.5 Z" fill="#8a8d8e"/></svg>
  <div class="tt" style="left:975px;top:9px;font-size:13px;color:#d6d6d6">robot + console</div>
  <div style="position:absolute;left:1870px;top:15px;width:11px;height:1.6px;background:#cfcfcf"></div>
  <svg style="position:absolute;left:1901px;top:8px" width="19" height="16"><rect x="1" y="1" width="11" height="9" fill="none" stroke="#d0d0d0" stroke-width="1.5"/><rect x="6" y="5" width="11" height="9" fill="#262b2d" stroke="#d0d0d0" stroke-width="1.5"/></svg>
</div>
<div id="tabbar">
  <svg style="position:absolute;left:26px;top:42px" width="20" height="20"><path d="M10 1.5 L18 6 V14.5 L10 19 L2 14.5 V6 Z M2 6 L10 10.5 L18 6 M10 10.5 V19" fill="none" stroke="#d8d8d8" stroke-width="1.6" stroke-linejoin="round"/></svg>
  <div class="tt" style="left:56px;top:43px;font-size:16px;color:#e6e6e6">Prepare</div>
  <div style="position:absolute;left:141px;top:32px;width:142px;height:38px;background:#0cae45"></div><div style="position:absolute;left:141px;top:69px;width:142px;height:1.5px;background:#6fe39a"></div>
  <svg style="position:absolute;left:169px;top:42px" width="20" height="20"><path d="M10 2 L18 6 L10 10 L2 6 Z M2 10 L10 14 L18 10 M2 14 L10 18 L18 14" fill="none" stroke="#b6f5c8" stroke-width="1.7" stroke-linejoin="round"/></svg>
  <div class="tt" style="left:198px;top:43px;font-size:16px;color:#d8f7e2">Preview</div>
  <svg style="position:absolute;left:314px;top:42px" width="22" height="20"><path d="M2 2 H9 V7 H2 Z M2 10 V18 H6 M13 2 H19 V6 M12 12 H19 V18 H12 Z" fill="none" stroke="#d8d8d8" stroke-width="1.5"/></svg>
  <div class="tt" style="left:345px;top:43px;font-size:16px;color:#e6e6e6">Device</div>
  <svg style="position:absolute;left:457px;top:42px" width="20" height="20"><rect x="1.5" y="2" width="16" height="16" fill="none" stroke="#d8d8d8" stroke-width="1.5"/><path d="M5 6 H7 M9 6 H14 M5 10 H7 M9 10 H14 M5 14 H7 M9 14 H14" stroke="#d8d8d8" stroke-width="1.4"/></svg>
  <div class="tt" style="left:486px;top:43px;font-size:16px;color:#e6e6e6">Project</div>
  <svg style="position:absolute;left:585px;top:43px" width="18" height="18"><path d="M9 1.5 L15.5 5 V13 L9 16.5 L2.5 13 V5 Z" fill="none" stroke="#d8d8d8" stroke-width="1.5"/><circle cx="9" cy="9" r="2.6" fill="none" stroke="#d8d8d8" stroke-width="1.5"/></svg>
  <div class="tt" style="left:614px;top:43px;font-size:16px;color:#e6e6e6">Calibration</div>
  <svg style="position:absolute;left:1568px;top:42px" width="20" height="18"><rect x="1.5" y="1.5" width="6.5" height="15" fill="none" stroke="#2cc060" stroke-width="1.6"/><rect x="8" y="8" width="9" height="8.5" fill="none" stroke="#2cc060" stroke-width="1.6"/><rect x="12" y="1" width="5" height="5" fill="#a070e0"/></svg>
  <div style="position:absolute;left:1608px;top:40px;width:1.5px;height:23px;background:#51585a"></div>
  <div style="position:absolute;left:1621px;top:39px;width:141px;height:25px;border-radius:13px;background:#696c6d;overflow:hidden">
    <div style="position:absolute;left:0;top:0;width:26px;height:25px;background:#13b14a"></div>
  </div>
  <svg style="position:absolute;left:1629px;top:48px" width="12" height="8"><path d="M2 2 L6 5.5 L10 2" stroke="#eaffef" stroke-width="1.6" fill="none"/></svg>
  <div class="tt" style="left:1664px;top:43px;font-size:16px;color:#a4a6a6">Slice plate</div>
  <div style="position:absolute;left:1778px;top:39px;width:160px;height:25px;border-radius:13px;background:#10b048"></div>
  <div style="position:absolute;left:1803px;top:39px;width:1.5px;height:25px;background:#0a8a38"></div>
  <svg style="position:absolute;left:1786px;top:48px" width="12" height="8"><path d="M2 2 L6 5.5 L10 2" stroke="#eaffef" stroke-width="1.6" fill="none"/></svg>
  <div class="tt" style="left:1821px;top:43px;font-size:16.5px;color:#eafff0">Print plate</div>
</div>
<div id="slres">
  <div class="tt" style="left:13px;top:9px;font-size:13px;font-weight:bold;color:#f0f0f0">Slicing Result</div>
  <svg style="position:absolute;left:462px;top:11px" width="14" height="13"><path d="M1.5 2 L7 6 L12.5 2 M1.5 7 L7 11 L12.5 7" stroke="#e8e8e8" stroke-width="1.5" fill="none"/></svg>
</div>
<div id="thumbpanel"></div>
<div id="thumb"></div>
<svg style="position:absolute;left:0;top:128px" width="45" height="75"><g fill="#a9a9a9"><path d="M13 6 L31 5 L33 19 L14 20 Z" fill="#c8c8c8"/><path d="M12 18 L34 18 L33 22 L12 22 Z" fill="#e2e2e2"/><path d="M14 22 L32 22 L32 38 L16 40 Z"/><path d="M1 24 L14 31 L18 38 L10 44 L2 36 Z" fill="#cfcfcf"/><path d="M16 38 L30 38 L34 56 L20 58 Z" fill="#b9b9b9"/><path d="M15 56 L35 52 L38 68 L20 72 L14 64 Z" fill="#8f8f8f"/><path d="M15 56 L26 54 L27 62 L16 64 Z" fill="#d0d0d0"/></g></svg>
<div class="lbl" style="left:1863px;top:173px;width:45px;height:35px">
  <div style="position:absolute;left:0;top:4px;width:45px;text-align:center">455</div>
  <div style="position:absolute;left:0;top:19px;width:45px;text-align:center">91.00</div>
</div>
<div class="lbl" style="left:1867px;top:941px;width:41px;height:36px">
  <div style="position:absolute;left:0;top:4px;width:41px;text-align:center">1</div>
  <div style="position:absolute;left:0;top:19px;width:41px;text-align:center">0.20</div>
</div>
<div style="position:absolute;left:1917px;top:206px;width:3px;height:736px;background:#fbfbfb"></div>
<svg style="position:absolute;left:1906px;top:198px" width="10" height="12"><path d="M2 2 L8 10 L2 10 Z" fill="#fcfefd"/></svg>
<svg style="position:absolute;left:1906px;top:934px" width="10" height="16"><path d="M2 7 L8 2 L2 14 Z" fill="#fcfefd"/></svg>
<svg style="position:absolute;left:1506px;top:1038px" width="10" height="14"><path d="M9 2 L3 7 L9 12 Z" fill="#fcfefd"/></svg>
<div style="position:absolute;left:361px;top:1032px;width:1150px;height:26px;border-radius:13px;background:#fbfbfb"></div>
<div style="position:absolute;left:367px;top:1038px;width:1130px;height:14px;border-radius:7px;background:#0fae45"></div>
<div style="position:absolute;left:1483px;top:1034px;width:22px;height:22px;border-radius:50%;background:#11a745;box-shadow:0 0 0 1.5px #b6f0c6"></div>
<div class="lbl" style="left:1515px;top:1035px;width:34px;height:20px"><div style="position:absolute;left:0;top:3px;width:34px;text-align:center">298</div></div>
<div id="cube"><div class="tt" style="left:12px;top:4px;font-size:6px;color:#666">Top</div><div class="tt" style="left:1px;top:38px;font-size:13px;color:#555">Front</div></div>
<svg style="position:absolute;left:0;top:1045px" width="80" height="20"><path d="M0 8 L45 9" stroke="#c87878" stroke-width="3"/><path d="M43 3 L56 9 L43 14 Z" fill="#c87878"/><path d="M66 6 L72 13 M72 6 L66 13" stroke="#d09090" stroke-width="1.2"/></svg>
<div style="position:absolute;left:99px;top:1029px;width:37px;height:37px;border-radius:50%;background:#f6f6f6"></div>
<svg style="position:absolute;left:105px;top:1035px" width="25" height="25"><path d="M2 7 V2 H7 M18 2 H23 V7 M23 18 V23 H18 M7 23 H2 V18" stroke="#5e5e5e" stroke-width="2" fill="none"/><path d="M12.5 6.5 L18 9.5 V15.5 L12.5 18.5 L7 15.5 V9.5 Z M7 9.5 L12.5 12.5 L18 9.5 M12.5 12.5 V18.5" stroke="#5e5e5e" stroke-width="1.7" fill="none" stroke-linejoin="round"/></svg>

</body></html>
